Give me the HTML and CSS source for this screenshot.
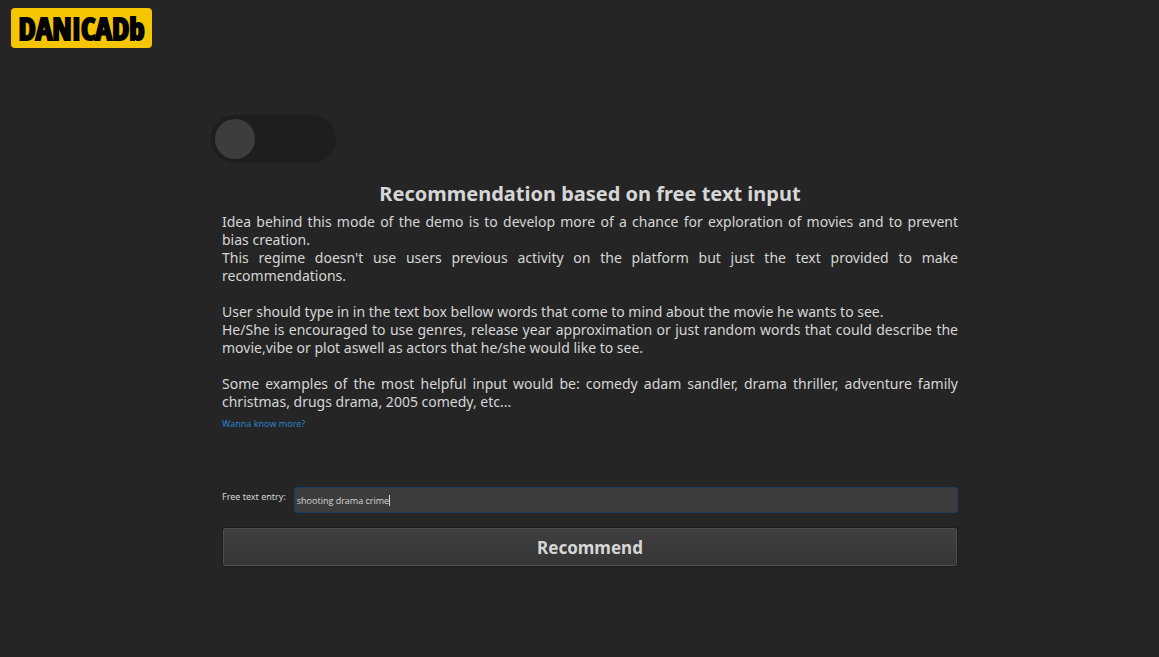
FILE: index.html
```html
<!DOCTYPE html>
<html lang="en">
<head>
<meta charset="utf-8">
<title>DANICADb</title>
<link rel="stylesheet" href="styles.css">
</head>
<body>
<header class="header"><span class="logo">DANICADb</span></header>
<main class="main">
  <input class="toggle" type="checkbox" role="switch" aria-label="Recommendation mode">
  <h1 class="title">Recommendation based on free text input</h1>
  <div class="intro">
    <p>Idea behind this mode of the demo is to develop more of a chance for exploration of movies and to prevent bias&nbsp;creation.</p>
    <p>This regime doesn't use users previous activity on the platform but just the text provided to make recommendations.</p>
    <p class="gap">User should type in in the text box bellow words that come to mind about the movie he wants to see.</p>
    <p>He/She is encouraged to use genres, release year approximation or just random words that could describe the movie,vibe or plot aswell as actors that he/she would like to see.</p>
    <p class="gap">Some examples of the most helpful input would be: comedy adam sandler, drama thriller, adventure family christmas, drugs drama, 2005 comedy, etc...</p>
  </div>
  <a class="more" href="#more">Wanna know more?</a>
  <form class="form">
    <div class="field">
      <label class="label" for="entry">Free text entry:</label>
      <div class="box">
        <input class="entry" id="entry" type="text" value="shooting drama crime" autofocus>
        <span class="caret"></span>
      </div>
    </div>
    <button class="submit" type="button">Recommend</button>
  </form>
</main>
</body>
</html>
```
FILE: styles.css
```css
* { box-sizing: border-box; }
body {
  margin: 0;
  min-height: 100vh;
  background: #252525;
  color: #d6d6d6;
  font-family: "Noto Sans", "Open Sans", sans-serif;
}
.header { display: flex; padding: 8px 11px; }
.logo {
  display: flex;
  align-items: center;
  justify-content: center;
  width: 141px;
  height: 40px;
  border-radius: 4px;
  background: #f5c500;
  color: #000;
  font: 700 31px/40px Impact, "Open Sans Condensed", "Roboto Condensed", "Noto Sans Condensed", "Liberation Sans", sans-serif;
  -webkit-text-stroke: 2px #000;
}
.main {
  display: flex;
  flex-direction: column;
  padding: 59px 201px 40px 222px;
}
.toggle {
  appearance: none;
  width: 125px;
  height: 48px;
  margin: 0 0 0 -11px;
  padding: 4px;
  border-radius: 24px;
  background: #1e1e1e;
}
.toggle::before {
  content: "";
  display: block;
  width: 40px;
  height: 40px;
  border-radius: 50%;
  background: #3d3d3d;
}
.toggle:checked::before { margin-left: auto; }
.title {
  margin: 18px 0 6px;
  font-size: 20px;
  line-height: 26px;
  text-align: center;
}
.intro {
  font-size: 14px;
  line-height: 18px;
  text-align: justify;
}
.intro p { margin: 0; }
.intro .gap { margin-top: 18px; }
.more {
  align-self: flex-start;
  margin-top: 6px;
  color: #2a82c8;
  font-size: 9px;
  line-height: 14px;
  text-decoration: none;
}
.field { display: flex; gap: 8px; margin-top: 56px; }
.label { font-size: 9px; line-height: 20px; white-space: nowrap; }
.box { position: relative; display: flex; flex: 1; }
.entry {
  flex: 1;
  min-width: 0;
  height: 26px;
  padding: 0 2px;
  border: 1px solid #1d3c5c;
  border-radius: 3px;
  outline: 0;
  background: #3c3c3c;
  color: #d6d6d6;
  caret-color: transparent;
  font: 9px "Open Sans", "Noto Sans", sans-serif;
}
.caret {
  position: absolute;
  top: 8px;
  left: 95px;
  width: 1px;
  height: 11px;
  background: #d6d6d6;
}
.submit {
  display: block;
  width: 100%;
  height: 40px;
  margin-top: 14px;
  border: 1px solid #1c1c1c;
  border-radius: 3px;
  background: linear-gradient(#404040, #353535);
  box-shadow: inset 0 0 0 1px #505050;
  color: #d6d6d6;
  font: bold 17px "Noto Sans", "Open Sans", sans-serif;
}
```
